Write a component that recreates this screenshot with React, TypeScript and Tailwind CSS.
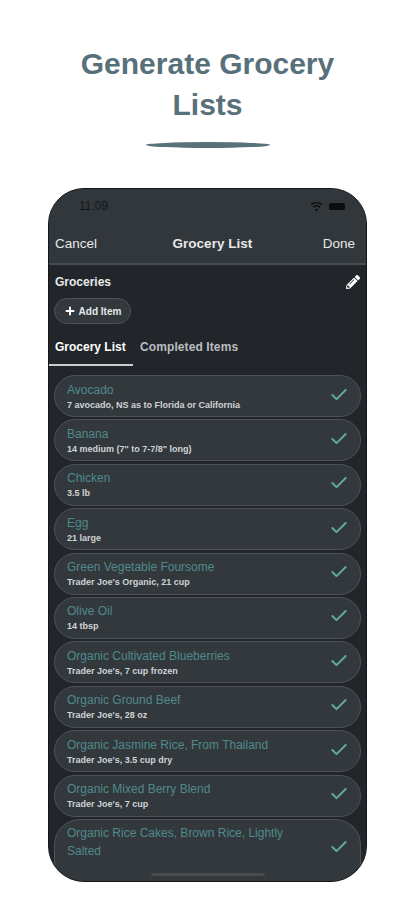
import { Check, Plus } from "lucide-react";
import { FaPencilAlt } from "react-icons/fa";

const items = [
  { name: "Avocado", detail: "7 avocado, NS as to Florida or California" },
  { name: "Banana", detail: '14 medium (7" to 7-7/8" long)' },
  { name: "Chicken", detail: "3.5 lb" },
  { name: "Egg", detail: "21 large" },
  { name: "Green Vegetable Foursome", detail: "Trader Joe's Organic, 21 cup" },
  { name: "Olive Oil", detail: "14 tbsp" },
  { name: "Organic Cultivated Blueberries", detail: "Trader Joe's, 7 cup frozen" },
  { name: "Organic Ground Beef", detail: "Trader Joe's, 28 oz" },
  { name: "Organic Jasmine Rice, From Thailand", detail: "Trader Joe's, 3.5 cup dry" },
  { name: "Organic Mixed Berry Blend", detail: "Trader Joe's, 7 cup" },
];

function StatusBar() {
  return (
    <div className="flex h-[34px] items-center justify-between pl-[30px] pr-[21px]">
      <span className="text-[12px] text-[#14171a]">11:09</span>
      <div className="flex items-center gap-[6px]">
        <span className="text-[8px] leading-none tracking-[1px] text-[#4a4f54]">....</span>
        <svg width="13" height="11" viewBox="0 0 12 10" fill="none" stroke="#0b0d0f" strokeWidth="1.4">
          <path d="M1 3.5C4 .8 8 .8 11 3.5" />
          <path d="M3 5.6C4.8 4 7.2 4 9 5.6" />
          <path d="M6 9.5 4.6 7.8C5.4 7.2 6.6 7.2 7.4 7.8Z" fill="#0b0d0f" stroke="none" />
        </svg>
        <div className="h-[7px] w-[16px] rounded-[1.5px] bg-[#0b0d0f]" />
      </div>
    </div>
  );
}

function ItemCard({ name, detail }: { name: string; detail: string }) {
  return (
    <div className="flex h-[42px] shrink-0 items-center justify-between rounded-[21px] border border-[#4c5257] bg-[#33383d] pl-[12px] pr-[11px]">
      <div className="min-w-0">
        <div className="text-[12px] leading-[16px] text-[#4f8a8b]">{name}</div>
        <div className="mt-[1px] text-[9px] font-bold leading-[12px] text-[#d0d3d5]">{detail}</div>
      </div>
      <Check size={20} strokeWidth={2.4} className="mb-[3px] text-[#5fa9a0]" />
    </div>
  );
}

export default function App() {
  return (
    <div className="h-[900px] w-[415px] overflow-hidden bg-white font-['Liberation_Sans',Arial,sans-serif]">
      <h1 className="pt-[43px] text-center text-[30px] font-bold leading-[41px] text-[#58707a]">
        Generate Grocery
        <br />
        Lists
      </h1>
      <div className="mx-auto mt-[17px] h-[6px] w-[124px] rounded-[50%] bg-[#58707a]" />

      <div className="relative mx-auto mt-[40px] flex h-[694px] w-[319px] flex-col overflow-hidden rounded-[36px] border border-[#14171a] bg-[#2c3035]">
        <div className="h-[76px] shrink-0 border-b-2 border-[#474c51] bg-[#32373c]">
          <StatusBar />
          <div className="flex items-center justify-between pl-[6px] pr-[11px] pt-[12px] text-[13.5px] leading-[18px] text-[#e6e8e9]">
            <span>Cancel</span>
            <span className="ml-[5px] font-bold">Grocery List</span>
            <span>Done</span>
          </div>
        </div>

        <div className="flex shrink-0 flex-col bg-[#22262b]">
          <div className="flex items-center justify-between pl-[6px] pr-[6px] pt-[8px]">
            <span className="text-[12px] font-bold leading-[18px] text-[#e6e8e9]">Groceries</span>
            <FaPencilAlt size={14} className="text-white" />
          </div>

          <div className="ml-[5px] mt-[7px] flex h-[26px] w-[77px] shrink-0 items-center justify-center gap-[3px] rounded-[13px] border border-[#4c5257] bg-[#33383d]">
            <Plus size={12} strokeWidth={4} className="text-white" />
            <span className="text-[10px] font-bold text-[#e6e8e9]">Add Item</span>
          </div>

          <div className="mt-[14px] flex h-[28px] shrink-0 items-start text-[12px] font-bold leading-[18px]">
            <div className="h-[28px] w-[84px] border-b-2 border-[#c9cccd] pl-[6px] text-white">Grocery List</div>
            <div className="pl-[7px] tracking-[0.1px] text-[#b9bdc0]">Completed Items</div>
          </div>

          <div className="flex flex-col gap-[2.4px] px-[5px] pt-[9px]">
            {items.map((item) => (
              <ItemCard key={item.name} {...item} />
            ))}
            <div className="flex h-[80px] shrink-0 items-start justify-between rounded-t-[26px] border border-b-0 border-[#4c5257] bg-[#33383d] pl-[12px] pr-[11px] pt-[4px]">
              <div className="w-[240px] text-[12px] leading-[18px] text-[#4f8a8b]">
                Organic Rice Cakes, Brown Rice, Lightly Salted
              </div>
              <Check size={20} strokeWidth={2.4} className="mt-[13px] text-[#5fa9a0]" />
            </div>
          </div>
        </div>

        <div className="absolute bottom-[5px] left-[102px] h-[3px] w-[114px] rounded-full bg-[#4a4b4b]" />
      </div>
    </div>
  );
}
